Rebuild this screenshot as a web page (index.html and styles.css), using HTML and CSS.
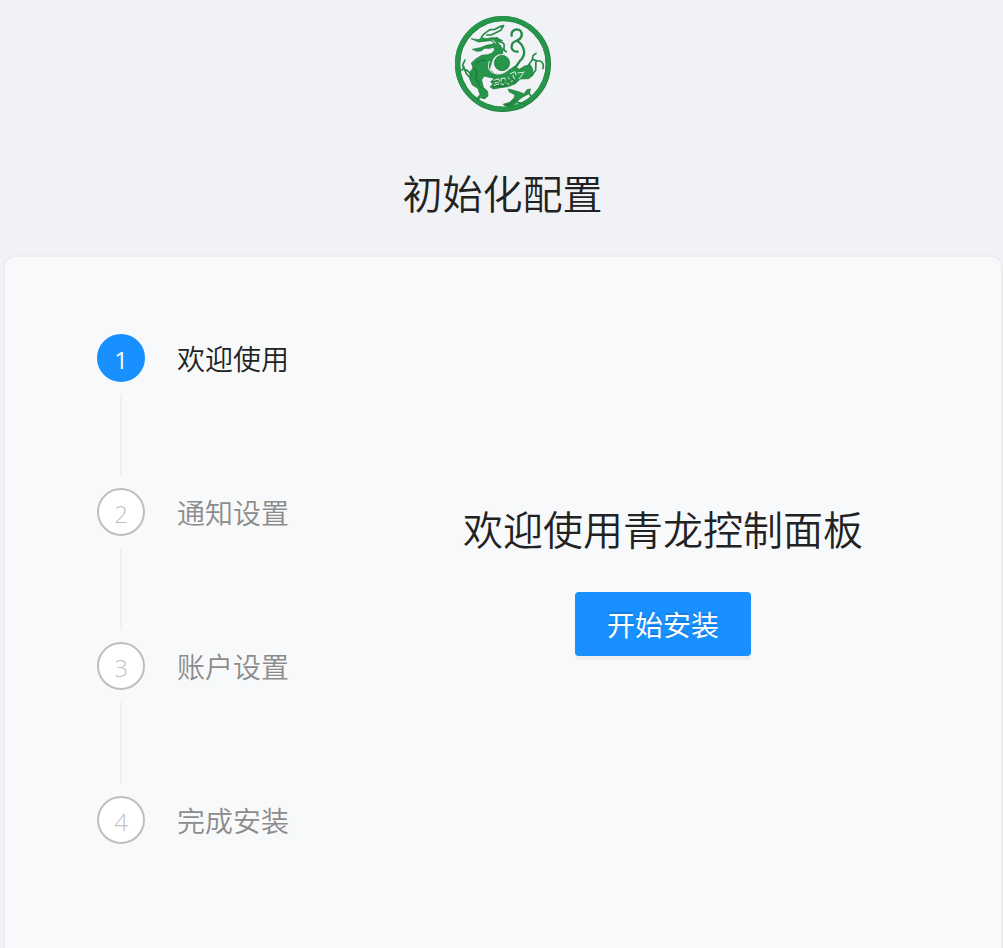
FILE: index.html
```html
<!DOCTYPE html>
<html lang="zh-CN">
<head>
<meta charset="utf-8">
<meta name="viewport" content="width=device-width, initial-scale=1">
<title>初始化配置</title>
<link rel="stylesheet" href="styles.css">
</head>
<body>
<header class="header">
  <svg class="logo" viewBox="14 18 288 288" role="img" aria-label="青龙">
    <circle cx="158" cy="162" r="136" fill="none" stroke="#1f7a3c" stroke-width="16"/>
    <circle cx="157" cy="161" r="136" fill="none" stroke="#26964a" stroke-width="14"/>
    <g fill="#26964a" stroke="#1d7439" stroke-width="2" stroke-linejoin="round">
      <circle cx="155" cy="159" r="23"/>
      <path d="M62 86 L84 89 L95 83 L108 86 L124 83 L140 83 L157 92 L141 97 L150 106 L158 119 L157 131 L145 132 Q128 139 124 157 L117 179 L136 193 L125 204 L101 198 L94 210 L99 232 L112 244 L113 258 L101 267 L94 257 L83 272 L79 266 L89 253 L82 235 L66 225 L58 207 L59 187 L68 173 L63 159 L76 147 L94 136 L112 134 L124 130 L133 120 L130 112 L118 115 L103 115 L92 123 L79 124 L66 118 L90 113 L108 106 L125 103 L131 97 L120 92 L104 94 L84 96 Z"/>
      <path d="M130 192 Q156 198 176 180 L193 169 L207 178 L223 168 L240 164 L247 177 L248 196 L235 206 L210 207 L195 221 L173 230 L151 233 L129 237 L119 231 L127 222 L121 215 L130 207 L124 198 Z"/>
      <path d="M174 237 L190 241 L210 247 L221 252 L230 239 L241 237 L236 251 L219 260 L207 268 L198 280 L185 288 L170 290 L158 283 L178 277 L191 264 L194 254 L176 245 Z"/>
    </g>
    <g class="logo-stroke" stroke="#238a44" stroke-width="5">
      <path d="M93 82 L103 70 L119 59 L134 58 L148 50 L160 47 L151 61 L135 69 L122 75 L109 75"/>
      <path d="M140 84 L148 96 Q165 97 161 113 Q158 121 168 125"/>
      <path d="M235 164 L245 151 L248 137 L257 130 M246 146 L258 153 L270 153 Q282 159 278 176 M257 151 L256 181 L244 196"/>
      <path d="M44 150 L37 165 L41 177 L53 183 L63 194 M39 169 L48 191 L60 204 M41 171 L35 181"/>
      <path d="M104 264 L93 263 M202 278 L222 281 M235 247 L240 256"/>
    </g>
    <g class="logo-stroke" stroke="#238a44" stroke-width="7">
      <path d="M184 77 Q181 62 198 58 Q216 58 214 77 Q211 88 197 93 Q182 98 184 114 Q188 126 202 125"/>
      <path d="M201 93 Q217 102 221 122 Q224 138 210 151 L194 174"/>
    </g>
    <g class="logo-stroke" stroke="#e3eee8" stroke-width="3">
      <path d="M117 154 Q107 181 130 190 Q153 197 171 181"/>
      <path d="M131 211 L143 207 M134 218 L148 215 L145 207 M153 214 L152 206 L163 204 L165 213 M174 203 L180 210 M188 196 L192 207 M132 226 L145 222 M151 221 L160 224 M166 217 L175 223 M184 214 L189 211"/>
      <path d="M180 191 L194 185 L197 195 M203 189 L217 187 M126 90 L136 99"/>
      <path d="M207 206 L222 185"/>
    </g>
    <g class="logo-stroke" stroke="#19552c" stroke-width="2">
      <path d="M69 171 L80 185 L76 205 L87 219 M78 160 L92 151 L105 151 M83 223 L94 235 M164 285 L181 282 L199 267"/>
      <path d="M127 215 L142 213 L150 219 L162 209 L169 218 L183 205 L190 213 M129 231 L143 227 L157 230 L170 222 M196 219 L188 207"/>
    </g>
  </svg>
  <h1 class="title">初始化配置</h1>
</header>
<main class="card">
  <ol class="steps">
    <li class="step step-active" aria-current="step"><span class="step-icon">1</span><span class="step-label">欢迎使用</span></li>
    <li class="step"><span class="step-icon">2</span><span class="step-label">通知设置</span></li>
    <li class="step"><span class="step-icon">3</span><span class="step-label">账户设置</span></li>
    <li class="step"><span class="step-icon">4</span><span class="step-label">完成安装</span></li>
  </ol>
  <section class="welcome">
    <h2 class="title">欢迎使用青龙控制面板</h2>
    <button class="start" type="button">开始安装</button>
  </section>
</main>
</body>
</html>
```
FILE: styles.css
```css
* {
  box-sizing: border-box;
}

body {
  display: flex;
  flex-direction: column;
  min-height: 100vh;
  margin: 0;
  background: #f0f2f5;
  color: #222;
  font-family: "Open Sans", "Noto Sans CJK SC", sans-serif;
}

.header {
  display: flex;
  flex-direction: column;
  align-items: center;
  gap: 50px;
  padding: 16px 0 33px 2px;
}

.logo {
  display: block;
  width: 96px;
  height: 96px;
}

.logo-stroke {
  fill: none;
  stroke-linecap: round;
  stroke-linejoin: round;
}

.title {
  margin: 0;
  font-family: "Noto Sans CJK SC", sans-serif;
  font-size: 40px;
  font-weight: 350;
  line-height: 60px;
}

.card {
  display: flex;
  flex: 1;
  align-items: flex-start;
  margin: 0 0 0 3px;
  padding: 77px 92px 48px;
  border: 2px solid #ededf0;
  border-bottom: 0;
  border-radius: 12px 12px 0 0;
  background: #f7f9fb;
}

.steps {
  flex: 0 0 320px;
  margin: 0;
  padding: 0;
  list-style: none;
}

.step {
  display: grid;
  grid-template-columns: 48px 1fr;
  grid-template-rows: 48px;
  column-gap: 32px;
  color: #8c8c8c;
}

.step:not(:last-child)::after {
  content: "";
  justify-self: center;
  width: 2px;
  height: 82px;
  margin: 12px 0;
  background: #f0f0f0;
}

.step-icon {
  display: flex;
  align-items: center;
  justify-content: center;
  padding-top: 4px;
  border: 2px solid #bfbfbf;
  border-radius: 50%;
  background: #fff;
  color: #bfbfbf;
  font-size: 24px;
  font-weight: 300;
  line-height: 40px;
}

.step-label {
  font-family: "Noto Sans CJK SC", sans-serif;
  font-size: 28px;
  font-weight: 350;
  line-height: 48px;
}

.step-active {
  color: #222;
}

.step-active .step-icon {
  border-color: #1890ff;
  background: #1890ff;
  color: #fff;
  font-weight: 400;
}

.welcome {
  display: flex;
  flex: 1;
  flex-direction: column;
  align-items: center;
  gap: 34px;
  padding-top: 164px;
}

.start {
  height: 64px;
  padding: 0 32px;
  border: 0;
  border-radius: 4px;
  background: #1890ff;
  box-shadow: 0 4px 0 rgba(0, 0, 0, 0.045);
  color: #fff;
  font-family: "Noto Sans CJK SC", sans-serif;
  font-size: 28px;
  font-weight: 400;
  line-height: 64px;
  text-shadow: 0 -2px 0 rgba(0, 0, 0, 0.12);
  cursor: pointer;
}
```
